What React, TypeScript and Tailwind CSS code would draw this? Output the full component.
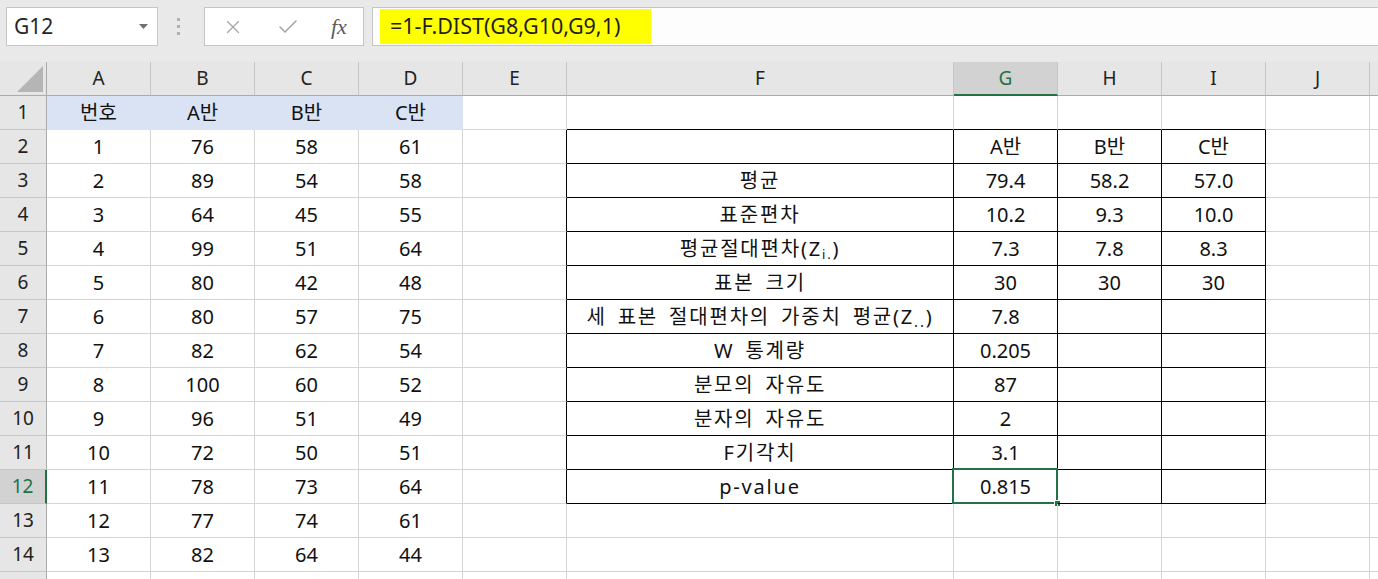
import { Check, X } from "lucide-react";

type Col = { key: string; w: string };

const COLS: Col[] = [
  { key: "A", w: "w-[104px]" },
  { key: "B", w: "w-[104px]" },
  { key: "C", w: "w-[104px]" },
  { key: "D", w: "w-[104px]" },
  { key: "E", w: "w-[104px]" },
  { key: "F", w: "w-[387px]" },
  { key: "G", w: "w-[104px]" },
  { key: "H", w: "w-[104px]" },
  { key: "I", w: "w-[104px]" },
  { key: "J", w: "w-[104px]" },
  { key: "K", w: "w-[104px]" },
];

const LEFT: (string | number)[][] = [
  ["번호", "A반", "B반", "C반"],
  [1, 76, 58, 61],
  [2, 89, 54, 58],
  [3, 64, 45, 55],
  [4, 99, 51, 64],
  [5, 80, 42, 48],
  [6, 80, 57, 75],
  [7, 82, 62, 54],
  [8, 100, 60, 52],
  [9, 96, 51, 49],
  [10, 72, 50, 51],
  [11, 78, 73, 64],
  [12, 77, 74, 61],
  [13, 82, 64, 44],
];

const STATS: React.ReactNode[][] = [
  ["", "A반", "B반", "C반"],
  ["평균", "79.4", "58.2", "57.0"],
  ["표준편차", "10.2", "9.3", "10.0"],
  [
    <>
      평균절대편차(Z<sub className="text-[13px] leading-none">i.</sub>)
    </>,
    "7.3",
    "7.8",
    "8.3",
  ],
  ["표본 크기", "30", "30", "30"],
  [
    <>
      세 표본 절대편차의 가중치 평균(Z<sub className="text-[15px] leading-none">..</sub>)
    </>,
    "7.8",
    "",
    "",
  ],
  ["W 통계량", "0.205", "", ""],
  ["분모의 자유도", "87", "", ""],
  ["분자의 자유도", "2", "", ""],
  ["F기각치", "3.1", "", ""],
  ["p-value", "0.815", "", ""],
];

const TABLE_COLS = "FGHI";

function cellValue(col: string, row: number): React.ReactNode {
  const li = "ABCD".indexOf(col);
  if (li >= 0 && row <= LEFT.length) return LEFT[row - 1][li];
  const ti = TABLE_COLS.indexOf(col);
  if (ti >= 0 && row >= 2 && row <= 12) return STATS[row - 2][ti];
  return "";
}

function cellClass(col: string, row: number) {
  const inTable = TABLE_COLS.includes(col) && row >= 2 && row <= 12;
  const blue = "ABCD".includes(col) && row === 1;
  let cls = "relative flex shrink-0 items-center justify-center border-r border-b";
  if (blue) cls += " bg-[#dae3f3] border-r-[#dae3f3] border-b-[#dae3f3]";
  else {
    cls += inTable || (col === "E" && row >= 2 && row <= 12) ? " border-r-black" : " border-r-[#d4d4d4]";
    cls += TABLE_COLS.includes(col) && row >= 1 && row <= 12 ? " border-b-black" : " border-b-[#d4d4d4]";
  }
  if (col === "F") cls += " tracking-[1.8px] [word-spacing:4px]";
  return cls;
}

function FormulaBar() {
  return (
    <div className="flex h-[62px] items-start bg-[#e9e9e9] pt-[7px]">
      <div className="ml-[6px] flex h-[39px] w-[152px] items-center justify-between border border-[#c6c6c6] bg-white pl-[7px] pr-[9px]">
        <span className="text-[21px] text-[#262626]">G12</span>
        <svg width="9" height="5" viewBox="0 0 9 5">
          <polygon points="0,0 9,0 4.5,5" fill="#707070" />
        </svg>
      </div>
      <div className="ml-[19px] mt-[11px] flex flex-col gap-[4px]">
        <span className="block h-[3px] w-[3px] bg-[#b0b0b0]" />
        <span className="block h-[3px] w-[3px] bg-[#b0b0b0]" />
        <span className="block h-[3px] w-[3px] bg-[#b0b0b0]" />
      </div>
      <div className="ml-[24px] flex h-[39px] w-[160px] items-center border border-[#c6c6c6] bg-white">
        <X size={22} strokeWidth={1.4} className="ml-[17px] text-[#a6a6a6]" />
        <Check size={24} strokeWidth={1.6} className="ml-[32px] text-[#a6a6a6]" />
        <span className="ml-[31px] font-['Liberation_Serif',serif] text-[22px] italic text-[#5a5a5a]">
          fx
        </span>
      </div>
      <div className="ml-[8px] flex h-[39px] flex-1 items-center border border-r-0 border-[#c6c6c6] bg-[#fdfdfd] pl-[7px]">
        <span className="flex h-[35px] w-[271px] items-center bg-[#ffff00] pl-[10px] text-[21.5px] text-[#1f1f1f]">
          =1-F.DIST(G8,G10,G9,1)
        </span>
      </div>
    </div>
  );
}

function HeaderRow() {
  return (
    <div className="flex h-[34px] bg-[#e6e6e6]">
      <div className="relative w-[47px] shrink-0 border-r border-b border-r-[#ababab] border-b-[#ababab]">
        <svg className="absolute left-[17px] top-[4px]" width="26" height="26" viewBox="0 0 26 26">
          <polygon points="26,0 26,26 0,26" fill="#b5b5b5" />
        </svg>
      </div>
      {COLS.map((c) =>
        c.key === "G" ? (
          <div
            key={c.key}
            className={`${c.w} flex shrink-0 items-center justify-center border-r border-r-[#c6c6c6] border-b-2 border-b-[#217346] bg-[#d2d2d2] pt-[1px] text-[19px] text-[#217346]`}
          >
            {c.key}
          </div>
        ) : (
          <div
            key={c.key}
            className={`${c.w} flex shrink-0 items-center justify-center border-r border-b border-r-[#c6c6c6] border-b-[#ababab] text-[19px] text-[#222]`}
          >
            {c.key === "K" ? "" : c.key}
          </div>
        )
      )}
    </div>
  );
}

function SheetRow({ row }: { row: number }) {
  const selected = row === 12;
  return (
    <div className="flex h-[34px]">
      {selected ? (
        <div className="flex w-[47px] shrink-0 items-center justify-center border-b border-b-[#c6c6c6] border-r-2 border-r-[#217346] bg-[#d2d2d2] text-[19px] text-[#217346]">
          {row}
        </div>
      ) : (
        <div className="flex w-[47px] shrink-0 items-center justify-center border-r border-b border-r-[#ababab] border-b-[#c6c6c6] bg-[#e6e6e6] text-[19px] text-[#222]">
          {row <= 14 ? row : ""}
        </div>
      )}
      {COLS.map((c) => (
        <div key={c.key} className={`${c.w} ${cellClass(c.key, row)}`}>
          <span className="whitespace-nowrap">{cellValue(c.key, row)}</span>
          {selected && c.key === "G" && (
            <>
              <div className="absolute -left-[2px] -top-[2px] h-[36px] w-[106px] border-2 border-[#217346]" />
              <div className="absolute -bottom-[4px] -right-[4px] h-[7px] w-[7px] border border-white bg-[#217346]" />
            </>
          )}
        </div>
      ))}
    </div>
  );
}

export default function App() {
  const rows = Array.from({ length: 15 }, (_, i) => i + 1);
  return (
    <div className="h-[579px] w-[1378px] overflow-hidden bg-white font-['Noto_Sans','Noto_Sans_CJK_KR',sans-serif] text-[20px] text-[#111]">
      <FormulaBar />
      <HeaderRow />
      {rows.map((r) => (
        <SheetRow key={r} row={r} />
      ))}
    </div>
  );
}
